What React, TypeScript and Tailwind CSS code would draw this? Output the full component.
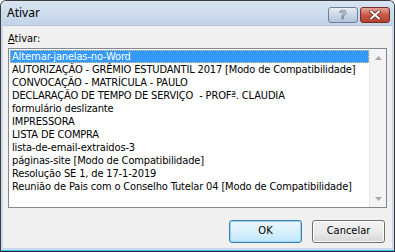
import React from "react";

const items = [
  "Alternar-janelas-no-Word",
  "AUTORIZAÇÃO - GRÊMIO ESTUDANTIL 2017 [Modo de Compatibilidade]",
  "CONVOCAÇÃO - MATRÍCULA - PAULO",
  "DECLARAÇÃO DE TEMPO DE SERVIÇO\u00a0 - PROFª. CLAUDIA",
  "formulário deslizante",
  "IMPRESSORA",
  "LISTA DE COMPRA",
  "lista-de-email-extraidos-3",
  "páginas-site [Modo de Compatibilidade]",
  "Resolução SE 1, de 17-1-2019",
  "Reunião de Pais com o Conselho Tutelar 04 [Modo de Compatibilidade]",
];

const listFont = {
  fontFamily: '"DejaVu Sans Condensed", "DejaVu Sans", Tahoma, sans-serif',
  fontStretch: "semi-condensed",
};

export default function App() {
  return (
    <div className="w-[395px] h-[252px] bg-white overflow-hidden">
      <div className="w-[395px] h-[252px] flex flex-col border-x border-t border-[#3c3c3c] rounded-t-[6px] bg-[#cad9eb] overflow-hidden">
        {/* Title bar */}
        <div className="h-[24px] flex items-start bg-gradient-to-b from-[#d8e4f2] to-[#c3d4e9] shrink-0">
          <div
            className="pl-[6px] pt-[5px] text-[12px] leading-[14px] text-black"
            style={{ fontFamily: '"Noto Sans", "Liberation Sans", sans-serif' }}
          >
            Ativar
          </div>
          <div className="flex-1" />
          <div className="flex gap-[2px] pt-[6px] pr-[4px]">
            <div className="w-[30px] h-[16px] rounded-[3px] border border-[#6f7f95] bg-gradient-to-b from-[#e9eef5] via-[#c9d6e6] to-[#b3c4da] flex items-center justify-center">
              <span
                className="text-[12px] leading-[12px] font-bold text-white"
                style={{ fontFamily: '"Liberation Sans", sans-serif', WebkitTextStroke: "0.6px #4a5566" }}
              >
                ?
              </span>
            </div>
            <div className="w-[30px] h-[16px] rounded-[3px] border border-[#7a2a20] bg-gradient-to-b from-[#e4a598] via-[#c9584a] to-[#b8402f] flex items-center justify-center">
              <svg width="12" height="10" viewBox="0 0 12 10">
                <path d="M2 1.5 L10 8.5 M10 1.5 L2 8.5" stroke="#5a1e16" strokeWidth="3.4" strokeLinecap="square" />
                <path d="M2 1.5 L10 8.5 M10 1.5 L2 8.5" stroke="#ffffff" strokeWidth="2" strokeLinecap="square" />
              </svg>
            </div>
          </div>
        </div>
        {/* Client */}
        <div className="flex-1 flex flex-col mx-[2px] border-t border-[#b5c4d6]">
          <div className="flex-1 bg-[#f0f0f0] flex flex-col px-[5px] pt-[6px]" style={listFont}>
            <div className="text-[11px] leading-[13px] text-black h-[16px]">
              <span className="underline underline-offset-[1px]">A</span>tivar:
            </div>
            <div className="h-[160px] border border-[#828790] bg-white flex">
              <div className="flex-1 flex flex-col pt-[1px] pl-[1px]">
                {items.map((t, i) => (
                  <div
                    key={i}
                    className={
                      "h-[13px] text-[11px] whitespace-pre tracking-[-0.15px] " +
                      (i === 0
                        ? "bg-[#3399ff] text-white border border-dotted border-[#e8c88a] pl-[1px] leading-[11px]"
                        : "text-black pl-[2px] leading-[13px]")
                    }
                  >
                    {t}
                  </div>
                ))}
              </div>
              <div className="w-[17px] bg-[#f4f4f4] border-l border-[#e6e6e6] flex flex-col justify-between">
                <div className="h-[17px] flex items-center justify-center">
                  <svg width="7" height="4" viewBox="0 0 7 4">
                    <path d="M0 4 L3.5 0 L7 4 Z" fill="#a8a8a8" />
                  </svg>
                </div>
                <div className="h-[17px] flex items-center justify-center">
                  <svg width="7" height="4" viewBox="0 0 7 4">
                    <path d="M0 0 L3.5 4 L7 0 Z" fill="#a8a8a8" />
                  </svg>
                </div>
              </div>
            </div>
            <div className="flex justify-end gap-[10px] pt-[12px] pr-[2px]">
              <div className="w-[73px] h-[23px] rounded-[3px] border border-[#3c7fb1] bg-gradient-to-b from-[#eaf6fd] via-[#d9f0fc] to-[#bee6fd] flex items-center justify-center text-[11px] text-black shadow-[inset_0_0_0_1px_#9ad3f4]">
                OK
              </div>
              <div className="w-[73px] h-[23px] rounded-[3px] border border-[#707070] bg-gradient-to-b from-[#f2f2f2] via-[#ebebeb] to-[#d6d6d6] flex items-center justify-center text-[11px] text-black shadow-[inset_0_0_0_1px_#fcfcfc]">
                Cancelar
              </div>
            </div>
          </div>
        </div>
        <div className="h-[2px] shrink-0 bg-[#cad9eb]" />
        <div className="h-[1px] shrink-0 bg-[#3fc1ea]" />
        <div className="h-[1px] shrink-0 bg-[#1c2a38]" />
      </div>
    </div>
  );
}
